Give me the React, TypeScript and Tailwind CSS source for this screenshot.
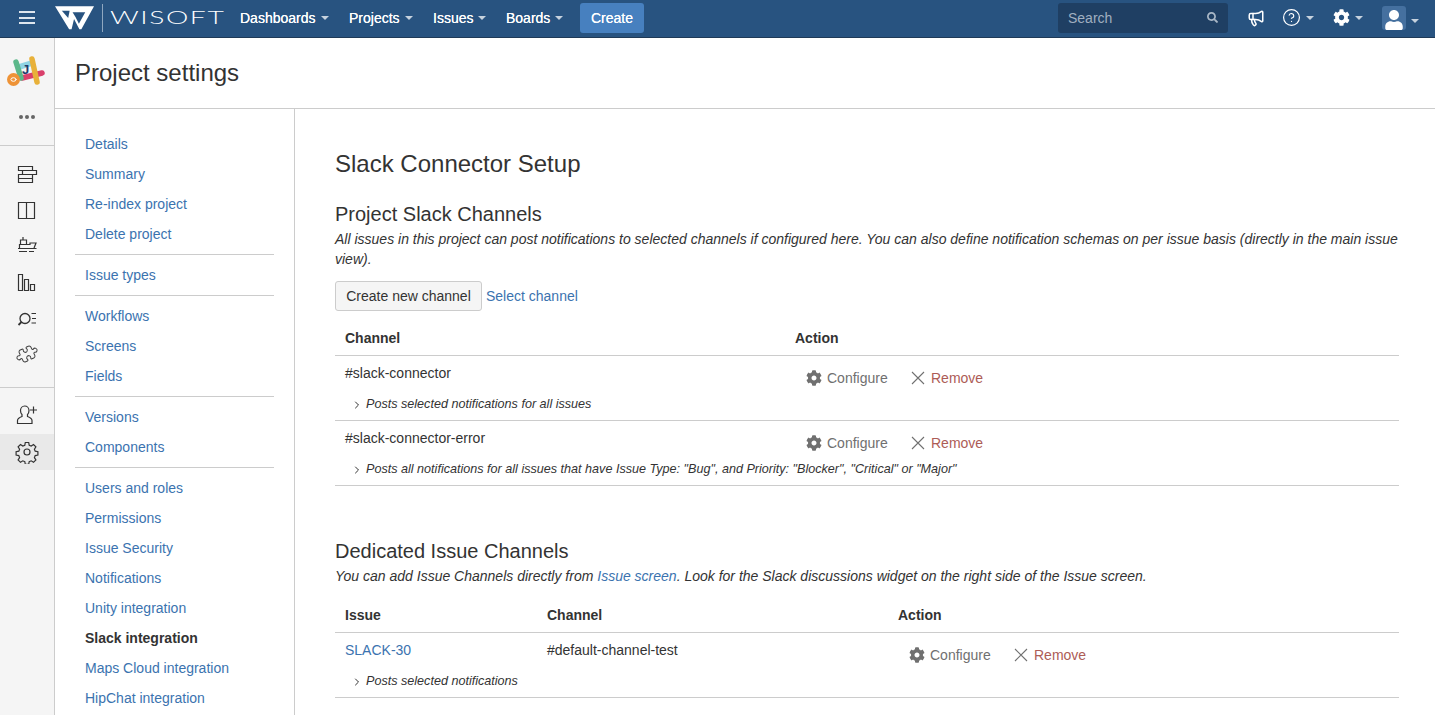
import { ChevronRight, CircleHelp, Megaphone, Puzzle } from "lucide-react";
import { FaCog, FaSearch, FaUser } from "react-icons/fa";

const navGroups = [
  ["Details", "Summary", "Re-index project", "Delete project"],
  ["Issue types"],
  ["Workflows", "Screens", "Fields"],
  ["Versions", "Components"],
  ["Users and roles", "Permissions", "Issue Security", "Notifications", "Unity integration", "Slack integration", "Maps Cloud integration", "HipChat integration"],
];

function Caret() {
  return <span className="ml-[5px] inline-block h-0 w-0 border-x-[4px] border-t-[4px] border-x-transparent border-t-[#c6d2de]" />;
}

function TopLink({ label, className }: { label: string; className: string }) {
  return (
    <div className={`flex items-center text-white [text-shadow:0_0_0.6px_#fff] ${className}`}>
      {label}
      <Caret />
    </div>
  );
}

function RailIcon({ children, active }: { children: React.ReactNode; active?: boolean }) {
  return (
    <div className={`flex h-9 items-center justify-center ${active ? "bg-[#e9e9e9]" : ""}`}>
      <svg width="24" height="24" viewBox="0 0 24 24" fill="none" stroke="#333" strokeWidth="1.2">
        {children}
      </svg>
    </div>
  );
}

function Actions() {
  return (
    <div className="flex items-center pl-[11px] pt-3 text-[#707070]">
      <FaCog className="h-[16px] w-[16px] text-[#707070]" />
      <span className="ml-[5px] w-[84px]">Configure</span>
      <svg width="14" height="14" viewBox="0 0 14 14" fill="none" stroke="#707070" strokeWidth="1.1">
        <path d="M1 1l12 12M13 1L1 13" />
      </svg>
      <span className="ml-[6px] text-[#ad5c56]">Remove</span>
    </div>
  );
}

function Sub({ text }: { text: string }) {
  return (
    <div className="mt-[7px] flex h-5 items-center pl-[16px] text-[12.6px] italic text-[#333]">
      <ChevronRight className="h-[12px] w-[12px] text-[#333]" strokeWidth={2} />
      <span className="ml-[3px]">{text}</span>
    </div>
  );
}

export default function App() {
  return (
    <div className="flex h-[715px] flex-col overflow-hidden bg-white font-['Liberation_Sans',Arial,sans-serif] text-sm text-[#333]">
      <header className="flex h-[38px] shrink-0 items-center border-b border-[#1f3a57] bg-[#285380] pb-[2px]">
        <div className="ml-[19px] flex h-[13px] w-4 flex-col justify-between">
          <span className="h-[2px] bg-[#dfe6ee]" />
          <span className="h-[2px] bg-[#dfe6ee]" />
          <span className="h-[2px] bg-[#dfe6ee]" />
        </div>
        <svg className="ml-5" width="40" height="26" viewBox="0 0 41 26" fill="#fff">
          <polygon points="0,1 40,1 27,24.500 25,24.500 19.500,14 17,24.500 14.500,24.500" />
          <polygon points="7,5.500 15,5.500 13.500,13" fill="#285380" />
          <polygon points="18,7 31,7 24.500,19 21,12" fill="#285380" />
        </svg>
        <span className="ml-[7px] h-[28px] w-px bg-[#8fa7c0]" />
        <span className="ml-[7px] w-[118px] origin-left scale-x-[1.57] font-['Lato',sans-serif] text-[18px] font-light tracking-[1px] text-white">WISOFT</span>
        <TopLink label="Dashboards" className="ml-[12px] w-[109px]" />
        <TopLink label="Projects" className="w-[84px]" />
        <TopLink label="Issues" className="w-[73px]" />
        <TopLink label="Boards" className="w-[74px]" />
        <div className="flex h-[30px] w-16 items-center justify-center rounded-[3px] bg-[#4780bf] text-white [text-shadow:0_0_0.6px_#fff]">Create</div>
        <div className="ml-auto flex h-[30px] w-[170px] items-center justify-between rounded-[3px] bg-[#1f3f63] px-[10px] text-[#a0afc0]">
          <span>Search</span>
          <FaSearch className="h-[11px] w-[11px] text-[#a9b7c6]" />
        </div>
        <Megaphone className="ml-[19px] h-[18px] w-[18px] text-white" strokeWidth={2} />
        <CircleHelp className="ml-[17px] h-[19px] w-[19px] text-white" strokeWidth={1.5} />
        <Caret />
        <FaCog className="ml-[19px] h-[17px] w-[17px] text-white" />
        <Caret />
        <div className="ml-[19px] flex h-6 w-6 items-end justify-center rounded-[3px] bg-[#45709f]">
          <FaUser className="h-[20px] w-[20px] text-white" />
        </div>
        <span className="mr-4"><Caret /></span>
      </header>
      <div className="flex min-h-0 flex-1">
        <aside className="w-[55px] shrink-0 border-r border-[#ccc] bg-[#f5f5f5]">
          <div className="flex h-[68px] items-center justify-center">
            <svg width="40" height="40" viewBox="0 0 40 40" fill="none" strokeLinecap="round" strokeWidth="5.500">
              <path d="M12 15L25 11" stroke="#8ed3e4" />
              <path d="M15 26L35 21" stroke="#d9406b" />
              <path d="M9 10L14 26" stroke="#5cb88a" />
              <path d="M25 7L30 30" stroke="#e8b13a" />
              <circle cx="6.500" cy="27.500" r="6.500" fill="#ee9337" stroke="none" />
              <ellipse cx="6.500" cy="27.500" rx="2.600" ry="1.800" fill="none" stroke="#fff" strokeWidth="1" />
              <text x="15" y="22" fontSize="13" fontWeight="700" fill="#1f3a6b" stroke="none" fontFamily="Liberation Sans">J</text>
            </svg>
          </div>
          <div className="flex h-[22px] items-center justify-center gap-[2px]">
            <span className="h-[4px] w-[4px] rounded-full bg-[#666]" />
            <span className="h-[4px] w-[4px] rounded-full bg-[#666]" />
            <span className="h-[4px] w-[4px] rounded-full bg-[#666]" />
          </div>
          <div className="mt-[17px] border-t border-[#ccc] pt-[10px] pb-[15px]">
            <RailIcon>
              <path d="M3.500 4.500h14v4h-14zM7.500 8.500h14v4h-14zM3.500 12.500h14v4h-14zM3.500 16.500h14v4h-14z" />
            </RailIcon>
            <RailIcon>
              <path d="M3.500 4.500h16v16h-16zM11.500 4.500v16" />
            </RailIcon>
            <RailIcon>
              <path d="M3 14.500h18.500M4 17.500h8M14 17.500h5M4.500 14v-3.500h10.500V9h6l-2 5M5.500 10.500v-4.500h6v4.500M8 6V3" />
            </RailIcon>
            <RailIcon>
              <path d="M3.500 4.500h4v16h-4zM9.500 9.500h4v11h-4zM15.500 14.500h4v6h-4z" />
            </RailIcon>
            <RailIcon>
              <circle cx="10" cy="12.500" r="5" strokeWidth="1.300" />
              <path d="M6.500 16L3.500 19" strokeWidth="1.800" />
              <path d="M16.500 7.500h4.500M17 12.500h4M16.500 17h4.500" />
            </RailIcon>
            <div className="flex h-9 items-center justify-center">
              <Puzzle className="h-[20px] w-[20px] rotate-[20deg] text-[#444]" strokeWidth={1.2} />
            </div>
          </div>
          <div className="border-t border-[#ccc] pt-[10px]">
            <RailIcon>
              <path d="M2.500 19.500v-3c0-2 2-3 4.500-4v-2c-1-1-1.500-2-1.500-4 0-2.500 1.800-4.500 4.200-4.500s4.300 2 4.300 4.500c0 2-.5 3-1.500 4v2c2.500 1 4.500 2 4.500 4v3z" />
              <path d="M18.500 2.500v7M15 6h7" />
            </RailIcon>
            <RailIcon active>
              <circle cx="12" cy="12" r="3" />
              <path d="M10.300 2.500h3.400l.5 2.700 2 .8 2.300-1.500 2.400 2.400-1.500 2.300.8 2 2.700.5v3.400l-2.700.5-.8 2 1.500 2.300-2.400 2.400-2.300-1.500-2 .8-.5 2.700h-3.400l-.5-2.700-2-.8-2.300 1.500-2.400-2.400 1.500-2.300-.8-2-2.700-.5v-3.400l2.700-.5.800-2-1.500-2.300 2.400-2.400 2.300 1.500 2-.8z" />
            </RailIcon>
          </div>
        </aside>
        <div className="flex min-w-0 flex-1 flex-col">
          <div className="flex h-[71px] shrink-0 items-center border-b border-[#ccc] pl-5 text-2xl text-[#333]">Project settings</div>
          <div className="flex min-h-0 flex-1">
            <nav className="w-[240px] shrink-0 border-r border-[#ccc] px-5 pt-5">
              {navGroups.map((group, i) => (
                <div key={i} className={`${i < navGroups.length - 1 ? "border-b border-[#ccc]" : ""} ${i > 0 ? "pt-[5px]" : ""} pb-[5px]`}>
                  {group.map((item) => (
                    <div key={item} className={`flex h-[30px] items-center pl-[10px] ${item === "Slack integration" ? "font-bold text-[#333]" : "text-[#3b73af]"}`}>
                      {item}
                    </div>
                  ))}
                </div>
              ))}
            </nav>
            <main className="min-w-0 flex-1 pl-10 pr-9 pt-[39px]">
              <h1 className="text-2xl leading-8 text-[#333]">Slack Connector Setup</h1>
              <h2 className="mt-5 text-xl leading-7 text-[#333]">Project Slack Channels</h2>
              <p className="mt-px leading-5 italic">
                All issues in this project can post notifications to selected channels if configured here. You can also define notification schemas on per issue basis (directly in the main issue view).
              </p>
              <div className="mt-3 flex items-center">
                <button className="h-[30px] w-[147px] rounded-[3px] border border-[#ccc] bg-[#f5f5f5] text-[#333]">Create new channel</button>
                <span className="ml-1 text-[#3b73af]">Select channel</span>
              </div>
              <div className="mt-[17px] flex border-b border-[#ccc] pb-[7px] font-bold leading-5">
                <div className="w-[460px] pl-[10px]">Channel</div>
                <div>Action</div>
              </div>
              {[
                ["#slack-connector", "Posts selected notifications for all issues"],
                ["#slack-connector-error", 'Posts all notifications for all issues that have Issue Type: "Bug", and Priority: "Blocker", "Critical" or "Major"'],
              ].map(([name, sub]) => (
                <div key={name} className="h-[65px] border-b border-[#ccc]">
                  <div className="flex">
                    <div className="w-[460px] pl-[10px] pt-[7px] leading-5">{name}</div>
                    <Actions />
                  </div>
                  <Sub text={sub} />
                </div>
              ))}
              <h2 className="mt-[51px] text-xl leading-7 text-[#333]">Dedicated Issue Channels</h2>
              <p className="mt-px leading-5 italic">
                You can add Issue Channels directly from <span className="text-[#3b73af]">Issue screen</span>. Look for the Slack discussions widget on the right side of the Issue screen.
              </p>
              <div className="mt-[19px] flex border-b border-[#ccc] pb-[7px] font-bold leading-5">
                <div className="w-[212px] pl-[10px]">Issue</div>
                <div className="w-[351px]">Channel</div>
                <div>Action</div>
              </div>
              <div className="h-[65px] border-b border-[#ccc]">
                <div className="flex">
                  <div className="w-[212px] pl-[10px] pt-[7px] leading-5 text-[#3b73af]">SLACK-30</div>
                  <div className="w-[351px] pt-[7px] leading-5">#default-channel-test</div>
                  <Actions />
                </div>
                <Sub text="Posts selected notifications" />
              </div>
            </main>
          </div>
        </div>
      </div>
    </div>
  );
}
